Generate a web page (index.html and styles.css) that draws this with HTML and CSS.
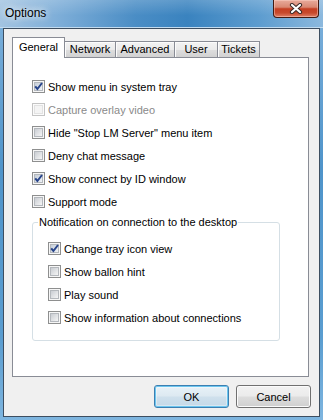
FILE: index.html
```html
<!DOCTYPE html>
<html lang="en">
<head>
<meta charset="utf-8">
<title>Options</title>
<link rel="stylesheet" href="styles.css">
</head>
<body>
<svg class="defs" aria-hidden="true" width="0" height="0">
  <defs>
    <linearGradient id="cbg" x1="0" y1="0" x2="1" y2="1">
      <stop offset="0" stop-color="#c6cad0"/>
      <stop offset="1" stop-color="#f8f8f8"/>
    </linearGradient>
    <linearGradient id="cbgx" x1="0" y1="0" x2="1" y2="1">
      <stop offset="0" stop-color="#c2cbd6"/>
      <stop offset="1" stop-color="#f2f5f8"/>
    </linearGradient>
    <symbol id="cb" viewBox="0 0 13 13">
      <rect x="0.5" y="0.5" width="12" height="12" fill="#f6f6f6" stroke="#8e8f8f"/>
      <rect x="2.5" y="2.5" width="8" height="8" fill="url(#cbg)" stroke="#b4b8bd"/>
    </symbol>
    <symbol id="cbx" viewBox="0 0 13 13">
      <rect x="0.5" y="0.5" width="12" height="12" fill="#f6f6f6" stroke="#8e8f8f"/>
      <rect x="2.5" y="2.5" width="8" height="8" fill="url(#cbgx)" stroke="#b4b8bd"/>
      <path d="M3.2 6.3 L5.4 9 L10 3" fill="none" stroke="#27448a" stroke-width="2"/>
    </symbol>
    <symbol id="cbd" viewBox="0 0 13 13">
      <rect x="0.5" y="0.5" width="12" height="12" fill="#fbfbfb" stroke="#c4c4c4"/>
      <rect x="2.5" y="2.5" width="8" height="8" fill="#f4f4f4" stroke="#e2e2e2"/>
    </symbol>
  </defs>
</svg>
<div class="window">
  <div class="titlebar">
    <span class="title">Options</span>
    <button class="close" aria-label="Close">
      <svg width="14" height="11" viewBox="0 0 14 11">
        <path d="M3 2 L11 9 M11 2 L3 9" stroke="#3b2a28" stroke-width="4.2" stroke-linecap="round"/>
        <path d="M3 2 L11 9 M11 2 L3 9" stroke="#ffffff" stroke-width="2.2" stroke-linecap="round"/>
      </svg>
    </button>
  </div>
  <div class="client">
    <div class="tabs">
      <div class="tab active t-general">General</div>
      <div class="tab t-network">Network</div>
      <div class="tab t-advanced">Advanced</div>
      <div class="tab t-user">User</div>
      <div class="tab t-tickets">Tickets</div>
    </div>
    <div class="panel">
      <div class="row"><svg class="cb"><use href="#cbx"/></svg><span>Show menu in system tray</span></div>
      <div class="row disabled"><svg class="cb"><use href="#cbd"/></svg><span>Capture overlay video</span></div>
      <div class="row"><svg class="cb"><use href="#cb"/></svg><span>Hide "Stop LM Server" menu item</span></div>
      <div class="row"><svg class="cb"><use href="#cb"/></svg><span>Deny chat message</span></div>
      <div class="row"><svg class="cb"><use href="#cbx"/></svg><span>Show connect by ID window</span></div>
      <div class="row"><svg class="cb"><use href="#cb"/></svg><span>Support mode</span></div>
      <fieldset class="group">
        <legend>Notification on connection to the desktop</legend>
        <div class="group-body">
          <div class="row"><svg class="cb"><use href="#cbx"/></svg><span>Change tray icon view</span></div>
          <div class="row"><svg class="cb"><use href="#cb"/></svg><span>Show ballon hint</span></div>
          <div class="row"><svg class="cb"><use href="#cb"/></svg><span>Play sound</span></div>
          <div class="row"><svg class="cb"><use href="#cb"/></svg><span>Show information about connections</span></div>
        </div>
      </fieldset>
    </div>
    <div class="buttons">
      <button class="btn default">OK</button>
      <button class="btn">Cancel</button>
    </div>
  </div>
</div>
</body>
</html>
```
FILE: styles.css
```css
* { box-sizing: border-box; }

html, body {
  margin: 0;
  padding: 0;
}

body {
  width: 323px;
  height: 420px;
  overflow: hidden;
  background: linear-gradient(180deg, #7fb2dc 0%, #4f94ca 40%, #5a9dd0 80%, #7eb5df 100%);
  font-family: "Liberation Sans", Arial, sans-serif;
  font-size: 11px;
  color: #000;
}

.defs {
  display: block;
  width: 0;
  height: 0;
  overflow: hidden;
}

.window {
  height: 420px;
  display: flex;
  flex-direction: column;
}

.titlebar {
  height: 28px;
  flex: none;
  display: flex;
  justify-content: space-between;
  align-items: flex-start;
  background:
    linear-gradient(180deg, rgba(255,255,255,0.18) 0%, rgba(255,255,255,0) 55%),
    linear-gradient(90deg, #a3c4e1 0%, #7eaed8 18%, #4a8dc5 42%, #3a83bf 58%, #5c9ccf 80%, #8cb9de 100%);
  box-shadow: inset 0 -1px 0 #c2dbef;
}

.title {
  padding-left: 5px;
  line-height: 27px;
  font-size: 12px;
  color: #000;
  text-shadow: 0 0 6px rgba(255,255,255,0.95), 0 0 10px rgba(255,255,255,0.7);
}

.close {
  width: 46px;
  height: 18px;
  margin: 0 4px 0 0;
  padding: 0;
  border: 1px solid #431a12;
  border-top: 0;
  border-radius: 0 0 4px 4px;
  background: linear-gradient(180deg, #e8ab9c 0%, #d98873 42%, #c53f23 52%, #c84a2d 76%, #df8068 100%);
  box-shadow: inset 0 0 0 1px rgba(255,215,205,0.45);
  display: flex;
  align-items: center;
  justify-content: center;
}

.client {
  flex: 1;
  margin: 0 3px 3px 3px;
  border: 1px solid #3d4e60;
  background: #f0f0f0;
  padding: 8px;
  display: flex;
  flex-direction: column;
}

.tabs {
  height: 20px;
  display: flex;
  align-items: flex-end;
  flex: none;
}

.tab {
  height: 16px;
  border: 1px solid #898c95;
  border-bottom: 0;
  margin-left: -1px;
  background: linear-gradient(180deg, #f3f3f3 0%, #ebebeb 50%, #dedede 50%, #d2d2d2 100%);
  box-shadow: inset 1px 1px 0 #fcfcfc;
  text-align: center;
  line-height: 15px;
  white-space: nowrap;
}

.tab.active {
  height: 21px;
  margin-bottom: -1px;
  margin-left: 0;
  background: #fff;
  box-shadow: none;
  position: relative;
  z-index: 1;
  line-height: 19px;
}

.t-general { width: 53px; }
.t-network { width: 52px; }
.t-advanced { width: 60px; }
.t-user { width: 44px; }
.t-tickets { width: 43px; }

.panel {
  height: 320px;
  flex: none;
  margin-right: 2px;
  border: 1px solid #898c95;
  background: #fff;
  padding: 17px 0 0 19px;
}

.row {
  height: 23px;
  display: flex;
  align-items: center;
  gap: 3px;
  white-space: nowrap;
}

.cb {
  width: 13px;
  height: 13px;
  flex: none;
}

.row.disabled {
  color: #8a8a8a;
}

.group {
  width: 248px;
  margin: 2px 0 0 0;
  padding: 0 0 11px 0;
  border: 1px solid #d5dfe5;
  border-radius: 3px;
  min-inline-size: 0;
}

.group legend {
  margin-left: 5px;
  padding: 0 1px;
  line-height: 14px;
}

.group-body {
  padding: 8px 0 0 15px;
}

.buttons {
  flex: none;
  margin-top: 8px;
  display: flex;
  justify-content: flex-end;
  gap: 7px;
}

.btn {
  width: 75px;
  height: 23px;
  margin: 0;
  padding: 0;
  font-family: inherit;
  font-size: 11px;
  color: #000;
  border: 1px solid #707070;
  border-radius: 3px;
  background: linear-gradient(180deg, #f2f2f2 0%, #ebebeb 48%, #dddddd 52%, #cfcfcf 100%);
  box-shadow: inset 0 0 0 1px #fbfbfb;
}

.btn.default {
  border-color: #3c7fb1;
  background: linear-gradient(180deg, #e8f2f8 0%, #dde9f1 48%, #cfe0ec 52%, #c4d9e8 100%);
  box-shadow: inset 0 0 0 1px #6cc6ef, inset 0 0 0 2px rgba(255,255,255,0.35);
}
```
